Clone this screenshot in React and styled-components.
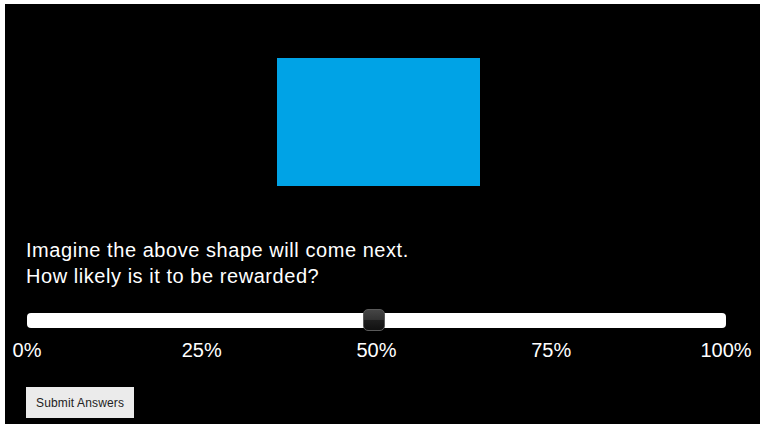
import React, { useState } from 'react';
import styled, { createGlobalStyle } from 'styled-components';

const GlobalStyle = createGlobalStyle`
  html, body {
    margin: 0;
    padding: 0;
    background: #ffffff;
  }
  body {
    font-family: "Liberation Sans", Arial, sans-serif;
  }
`;

const Panel = styled.div`
  margin: 4px 5px 0 5px;
  width: 755px;
  height: 420px;
  box-sizing: border-box;
  background: #000000;
  padding: 54px 34px 0 22px;
  display: flex;
  flex-direction: column;
`;

const Shape = styled.div`
  width: 203px;
  height: 128px;
  margin-left: 250px;
  background: #00a3e6;
`;

const Question = styled.p`
  margin: 51px 0 0 -1px;
  color: #ffffff;
  font-size: 20px;
  line-height: 26px;
  letter-spacing: 0.55px;
`;

const Slider = styled.div`
  position: relative;
  margin-top: 20px;
  height: 22px;
`;

const Track = styled.div`
  margin-top: 4px;
  height: 15px;
  border-radius: 4px;
  background: #ffffff;
`;

const Thumb = styled.div`
  position: absolute;
  top: 0;
  width: 22px;
  height: 22px;
  box-sizing: border-box;
  border: 1px solid #5a5a5a;
  border-radius: 5px;
  background: linear-gradient(to bottom, #454545 0%, #333333 48%, #1e1e1e 52%, #111111 100%);
  cursor: pointer;
`;

const Scale = styled.div`
  position: relative;
  margin-top: 7px;
  height: 24px;
`;

const Tick = styled.span`
  position: absolute;
  top: 0;
  transform: translateX(-50%);
  color: #ffffff;
  font-size: 20px;
  line-height: 24px;
  white-space: nowrap;
`;

const SubmitButton = styled.button`
  align-self: flex-start;
  margin-top: 25px;
  margin-left: -1px;
  height: 31px;
  padding: 0 10px;
  border: none;
  background: #ebebeb;
  color: #222222;
  font-family: "Liberation Sans", Arial, sans-serif;
  font-size: 12px;
  letter-spacing: 0.15px;
  cursor: pointer;
`;

const ticks = [0, 25, 50, 75, 100];

export default function App() {
  const [value] = useState(50);

  return (
    <>
      <GlobalStyle />
      <Panel>
        <Shape />
        <Question>
          Imagine the above shape will come next.
          <br />
          How likely is it to be rewarded?
        </Question>
        <Slider>
          <Track />
          <Thumb style={{ left: `calc(${value}% - 14px)` }} />
        </Slider>
        <Scale>
          {ticks.map((t) => (
            <Tick key={t} style={{ left: `${t}%` }}>{t}%</Tick>
          ))}
        </Scale>
        <SubmitButton>Submit Answers</SubmitButton>
      </Panel>
    </>
  );
}
